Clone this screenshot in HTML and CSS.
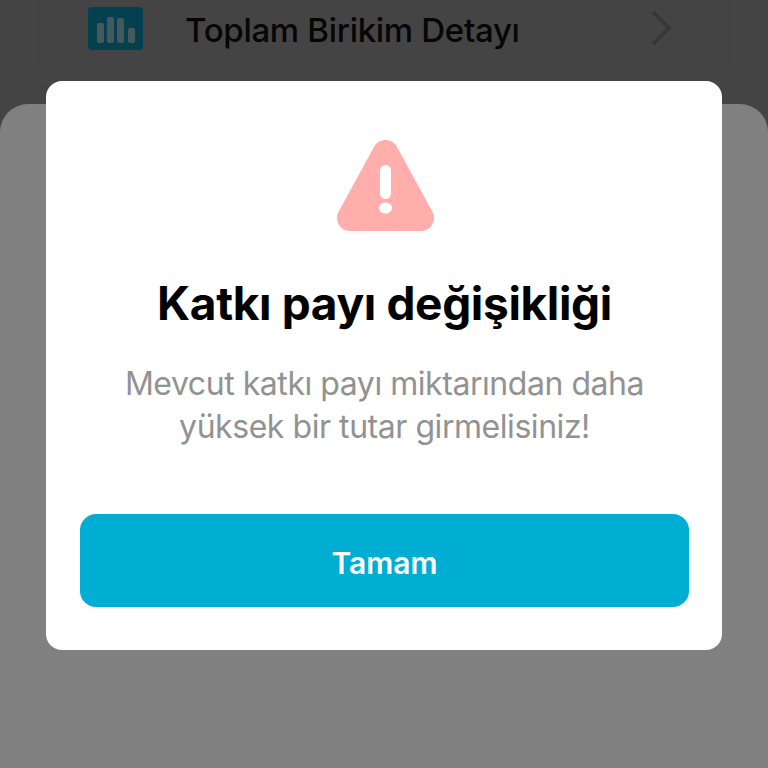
FILE: index.html
```html
<!DOCTYPE html>
<html lang="tr">
<head>
    <meta charset="UTF-8">
    <title>Katkı payı değişikliği</title>
    <link rel="stylesheet" href="styles.css">
</head>
<body>
    <div class="list-card">
        <svg class="list-icon" width="55" height="43" viewBox="0 0 55 43">
            <rect width="55" height="43" rx="4" fill="#04404f"/>
            <rect x="9" y="16" width="7" height="20" rx="2" fill="#46585c"/>
            <rect x="19" y="10" width="7" height="26" rx="2" fill="#46585c"/>
            <rect x="29" y="11" width="7" height="25" rx="2" fill="#46585c"/>
            <rect x="40" y="21" width="7" height="15" rx="2" fill="#46585c"/>
        </svg>
        <span class="list-title">Toplam Birikim Detayı</span>
        <svg class="list-arrow" width="24" height="36" viewBox="0 0 24 36">
            <path d="M4 1 L20 17 L4 33" fill="none" stroke="#383838" stroke-width="4"/>
        </svg>
    </div>
    <div class="sheet"></div>
    <div class="dialog">
        <svg class="warn-icon" width="100" height="92" viewBox="0 0 100 92">
            <path d="M50.5 13 L86 78 L15 78 Z" fill="#ffaeab" stroke="#ffaeab" stroke-width="26" stroke-linejoin="round"/>
            <rect x="45" y="25" width="11" height="34" rx="5.5" fill="#fff"/>
            <ellipse cx="50.5" cy="68" rx="6.5" ry="5.5" fill="#fff"/>
        </svg>
        <h1 class="dialog-title">Katkı payı değişikliği</h1>
        <p class="dialog-text">Mevcut katkı payı miktarından daha<br>yüksek bir tutar girmelisiniz!</p>
        <button class="dialog-btn">Tamam</button>
    </div>
</body>
</html>
```

FILE: styles.css
```css
html, body {
    margin: 0;
    height: 100%;
}
body {
    position: relative;
    width: 768px;
    height: 768px;
    overflow: hidden;
    background-color: #444;
    font-family: Inter, "Liberation Sans", sans-serif;
}
.list-card {
    display: flex;
    align-items: center;
    height: 60px;
    margin: 0 32px;
    padding-left: 55px;
    padding-right: 62px;
    padding-bottom: 22px;
    border: 1px solid #474747;
    border-top: none;
    border-radius: 0 0 18px 18px;
}
.list-icon {
    margin-bottom: 3px;
}
.list-title {
    flex: 1;
    margin-left: 42px;
    font-size: 33px;
    font-weight: 500;
    letter-spacing: -0.3px;
    color: #060606;
}
.list-arrow {
    margin-bottom: 3px;
}
.sheet {
    position: absolute;
    top: 104px;
    left: 0;
    right: 0;
    bottom: 0;
    border-radius: 28px 28px 0 0;
    background-color: #808080;
}
.dialog {
    position: absolute;
    top: 81px;
    left: 46px;
    width: 676px;
    height: 569px;
    box-sizing: border-box;
    padding: 59px 33px 43px 34px;
    display: flex;
    flex-direction: column;
    align-items: center;
    border-radius: 16px;
    background-color: #fff;
}
.warn-icon {
    display: block;
}
.dialog-title {
    margin: 43px 0 0;
    font-size: 46px;
    line-height: 56px;
    font-weight: 700;
    letter-spacing: -0.35px;
    color: #000;
}
.dialog-text {
    margin: 31px 0 0;
    font-size: 32px;
    line-height: 43px;
    text-align: center;
    letter-spacing: -0.45px;
    color: #929292;
}
.dialog-btn {
    margin-top: auto;
    width: 100%;
    height: 93px;
    border: none;
    border-radius: 16px;
    background-color: #00aed4;
    color: #fff;
    font-family: inherit;
    font-size: 30px;
    font-weight: 600;
    padding-top: 5px;
}
```
